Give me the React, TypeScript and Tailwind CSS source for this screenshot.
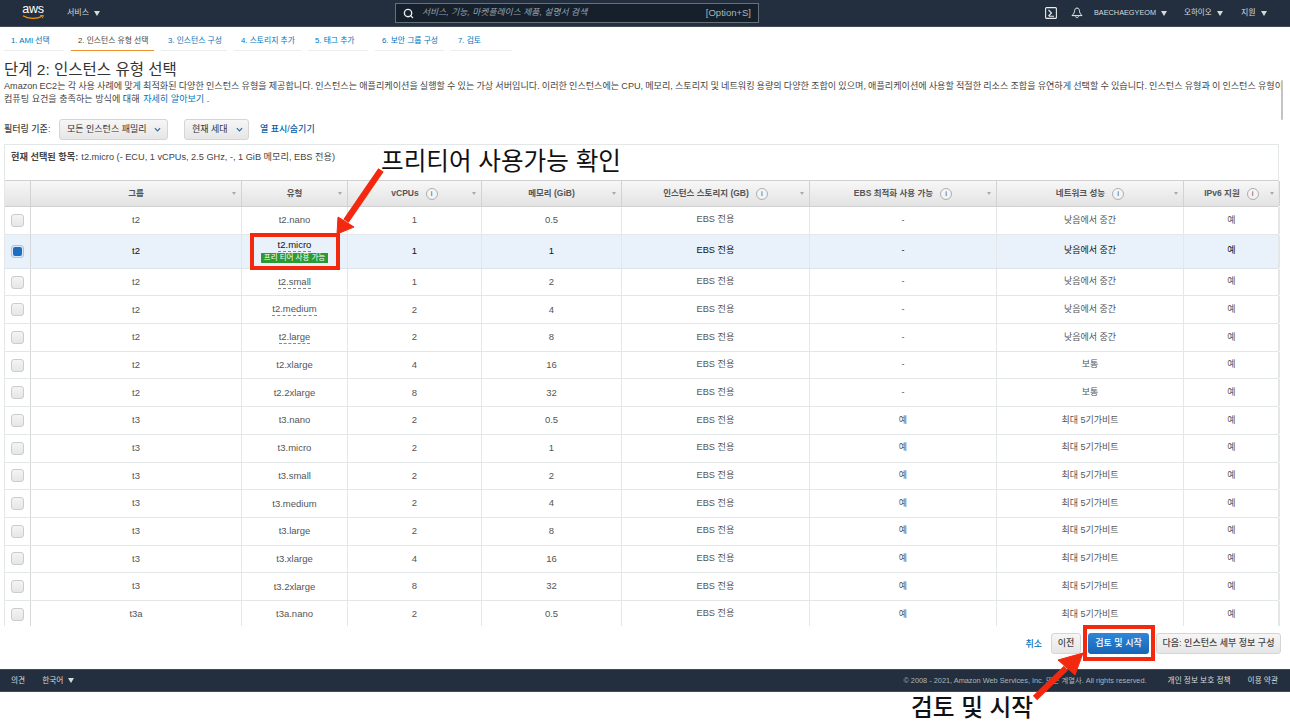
import React from "react";
import { Search } from "lucide-react";

const FONT = "font-['Liberation_Sans','Noto_Sans_CJK_KR',sans-serif]";
const GRID =
  "grid grid-cols-[26px_211px_106px_134px_140px_188px_187px_187px_96px]";

const TABS = [
  { label: "1. AMI 선택", w: "w-[60px]" },
  { label: "2. 인스턴스 유형 선택", w: "w-[83px]", active: true },
  { label: "3. 인스턴스 구성", w: "w-[66px]" },
  { label: "4. 스토리지 추가", w: "w-[67px]" },
  { label: "5. 태그 추가", w: "w-[60px]" },
  { label: "6. 보안 그룹 구성", w: "w-[69px]" },
  { label: "7. 검토", w: "w-[61px]" },
];

const COLUMNS = [
  { label: "그룹" },
  { label: "유형" },
  { label: "vCPUs", info: true },
  { label: "메모리 (GiB)" },
  { label: "인스턴스 스토리지 (GB)", info: true },
  { label: "EBS 최적화 사용 가능", info: true },
  { label: "네트워크 성능", info: true },
  { label: "IPv6 지원", info: true },
];

const LOW = "낮음에서 중간";
const MAX = "최대 5기가비트";

const ROWS: [string, string, string, string, string, string, string?][] = [
  ["t2", "t2.nano", "1", "0.5", "-", LOW],
  ["t2", "t2.micro", "1", "1", "-", LOW, "dash"],
  ["t2", "t2.small", "1", "2", "-", LOW, "dash"],
  ["t2", "t2.medium", "2", "4", "-", LOW, "dash"],
  ["t2", "t2.large", "2", "8", "-", LOW, "dash"],
  ["t2", "t2.xlarge", "4", "16", "-", "보통"],
  ["t2", "t2.2xlarge", "8", "32", "-", "보통"],
  ["t3", "t3.nano", "2", "0.5", "예", MAX],
  ["t3", "t3.micro", "2", "1", "예", MAX],
  ["t3", "t3.small", "2", "2", "예", MAX],
  ["t3", "t3.medium", "2", "4", "예", MAX],
  ["t3", "t3.large", "2", "8", "예", MAX],
  ["t3", "t3.xlarge", "4", "16", "예", MAX],
  ["t3", "t3.2xlarge", "8", "32", "예", MAX],
  ["t3a", "t3a.nano", "2", "0.5", "예", MAX],
];

const Tri = () => (
  <span className="ml-[5px] inline-block h-0 w-0 border-x-[3.5px] border-t-[5px] border-x-transparent border-t-[#d5dbdb]" />
);

const Info = () => (
  <span className="ml-[7px] flex h-[12px] w-[12px] items-center justify-center rounded-full border border-[#aab0b0] bg-white/40 text-[8px] font-normal text-[#555]">
    i
  </span>
);

const Cell = ({ children, className = "" }: { children: React.ReactNode; className?: string }) => (
  <div className={`flex flex-col items-center justify-center border-r border-[#e4e7e7] ${className}`}>
    {children}
  </div>
);

const Check = ({ on }: { on: boolean }) => (
  <div className="flex items-center justify-center border-r border-[#d5d8d8]">
    <span
      className={
        on
          ? "flex h-[13px] w-[13px] items-center justify-center rounded-[3px] border border-[#a9c6e8] bg-[#dce8f6]"
          : "h-[13px] w-[13px] rounded-[3px] border border-[#cccccc] bg-gradient-to-b from-[#f4f4f4] to-[#e6e6e6]"
      }
    >
      {on && <span className="h-[9px] w-[9px] rounded-[2px] bg-[#1b6ec2]" />}
    </span>
  </div>
);

export default function App() {
  return (
    <div className={`relative h-[723px] w-[1290px] overflow-hidden bg-white ${FONT}`}>
      {/* Top nav */}
      <header className="flex h-[27px] items-center border-b border-[#414b58] bg-[#232f3e] text-[8px] text-[#d5dbdb]">
        <div className="ml-[22px] flex h-[20px] w-[22px] flex-col items-center">
          <span className="text-[12.5px] font-normal leading-[13px] tracking-[-0.3px] text-white">aws</span>
          <svg viewBox="0 0 22 5" className="-mt-[1px] h-[5px] w-[22px]">
            <path d="M1 .8C6 4 15 4.2 20 1.2" fill="none" stroke="#f79400" strokeWidth="1.3" />
            <path d="M18.2.6 21.4.5 20.4 3.2" fill="none" stroke="#f79400" strokeWidth="1" />
          </svg>
        </div>
        <span className="ml-[23px] flex w-[37px] items-center">
          서비스
          <span className="ml-[5px] h-0 w-0 border-x-[3.5px] border-t-[5px] border-x-transparent border-t-[#d5dbdb]" />
        </span>
        <div className="ml-[291px] flex h-[20px] w-[364px] items-center border border-[#687078] bg-[#16202c] pl-[7px] pr-[7px]">
          <Search size={11} strokeWidth={3} className="text-[#eaeded]" />
          <span className="ml-[8px] flex-1 text-[8.8px] italic text-[#9aa3ab]">
            서비스, 기능, 마켓플레이스 제품, 설명서 검색
          </span>
          <span className="text-[9.5px] text-[#aab7b8]">[Option+S]</span>
        </div>
        <svg viewBox="0 0 12 12" className="ml-[286px] h-[12px] w-[12px]">
          <rect x=".6" y=".6" width="10.8" height="10.8" rx="1" fill="none" stroke="#eaeded" strokeWidth="1.1" />
          <path d="M3.5 3 6.5 6 3.5 9M4 9.2H9" fill="none" stroke="#eaeded" strokeWidth="1.1" />
        </svg>
        <svg viewBox="0 0 12 12" className="ml-[14px] h-[12px] w-[12px]">
          <path d="M6 1C4 1 3.6 3 3.4 4.8 3.2 6.4 2 7.4 1 8.6H11C10 7.4 8.8 6.4 8.6 4.8 8.4 3 8 1 6 1ZM4.6 9.2C4.8 11.2 7.2 11.2 7.4 9.2" fill="none" stroke="#eaeded" strokeWidth="1" />
        </svg>
        <span className="ml-[11px] flex w-[74px] items-center text-[7.3px]">
          BAECHAEGYEOM
          <Tri />
        </span>
        <span className="ml-[16px] flex w-[40px] items-center text-[7.5px]">
          오하이오
          <Tri />
        </span>
        <span className="ml-[17px] flex items-center">
          지원
          <Tri />
        </span>
      </header>

      {/* Wizard steps */}
      <nav className="ml-[4px] mt-[5px] flex h-[19px] gap-[7px]">
        {TABS.map((t) => (
          <div
            key={t.label}
            className={`${t.w} whitespace-nowrap pl-[7px] pt-[3px] text-[7.8px] leading-[11px] ${
              t.active
                ? "border-b-[1.5px] border-[#ec912d] text-[#444444]"
                : "border-b border-[#eaeded] text-[#0073bb]"
            }`}
          >
            {t.label}
          </div>
        ))}
      </nav>

      {/* Scrolling content */}
      <main className="relative h-[575px] overflow-hidden">
        <div className="w-[1279px] pl-[4px]">
          <h1 className="mt-[9px] text-[15.5px] font-normal leading-[20px] text-[#333333]">
            단계 2: 인스턴스 유형 선택
          </h1>
          <p className="whitespace-nowrap text-[9.1px] leading-[13px] text-[#444444] [word-spacing:-0.4px]">
            Amazon EC2는 각 사용 사례에 맞게 최적화된 다양한 인스턴스 유형을 제공합니다. 인스턴스는 애플리케이션을 실행할 수 있는 가상 서버입니다. 이러한 인스턴스에는 CPU, 메모리, 스토리지 및 네트워킹 용량의 다양한 조합이 있으며, 애플리케이션에 사용할 적절한 리소스 조합을 유연하게 선택할 수 있습니다. 인스턴스 유형과 이 인스턴스 유형이
          </p>
          <p className="text-[9.1px] leading-[13px] text-[#444444]">
            컴퓨팅 요건을 충족하는 방식에 대해 <span className="ml-[1px] text-[#0073bb]">자세히 알아보기</span> .
          </p>

          <div className="mt-[13px] flex h-[21px] items-center text-[9px]">
            <span className="w-[55px] font-medium text-[#444444]">필터링 기준:</span>
            <div className="flex h-[21px] w-[109px] items-center justify-between rounded-[3px] border border-[#d5d5d5] bg-gradient-to-b from-[#f6f6f6] to-[#e6e6e6] pl-[7px] pr-[6px] text-[#333333]">
              모든 인스턴스 패밀리
              <Chevron />
            </div>
            <div className="ml-[16px] flex h-[21px] w-[65px] items-center justify-between rounded-[3px] border border-[#d5d5d5] bg-gradient-to-b from-[#f6f6f6] to-[#e6e6e6] pl-[7px] pr-[5px] text-[#333333]">
              현재 세대
              <Chevron />
            </div>
            <span className="ml-[11px] font-medium text-[#0a5ea8]">열 표시/숨기기</span>
          </div>

          {/* Selected summary */}
          <div className="mt-[4px] flex h-[36px] w-[1275px] items-center border-x border-t border-[#e4e7e7] pl-[6px] pb-[10px] text-[9.2px] text-[#444444]">
            <span className="mr-[3px] font-bold">현재 선택된 항목:</span>
            t2.micro (- ECU, 1 vCPUs, 2.5 GHz, -, 1 GiB 메모리, EBS 전용)
          </div>

          {/* Table */}
          <div className="w-[1275px] border-x border-[#e4e7e7]">
            <div className={`${GRID} h-[27px] border-y border-[#d0d0d0] bg-gradient-to-b from-[#f7f7f7] to-[#e3e3e3] text-[8.5px] font-bold text-[#555555]`}>
              <div className="border-r border-[#d0d3d3]" />
              {COLUMNS.map((c) => (
                <div key={c.label} className="relative flex items-center justify-center border-r border-[#d0d3d3]">
                  {c.label}
                  {c.info && <Info />}
                  <span className="absolute right-[5px] top-[11px] h-0 w-0 border-x-[2.5px] border-t-[3px] border-x-transparent border-t-[#aaaaaa]" />
                </div>
              ))}
            </div>
            {ROWS.map((r) => {
              const on = r[1] === "t2.micro";
              return (
                <div
                  key={r[1]}
                  className={`${GRID} border-b text-[9.5px] ${
                    on
                      ? "h-[34px] border-[#dde3ea] bg-[#e9f1fb] text-[#111111]"
                      : "h-[27.7px] border-[#e4e7e7] text-[#555555]"
                  }`}
                >
                  <Check on={on} />
                  <Cell>{r[0]}</Cell>
                  <Cell>
                    <span className={r[6] ? "border-b border-dashed border-[#888888] leading-[12px]" : "leading-[12px]"}>
                      {r[1]}
                    </span>
                    {on && (
                      <span className="mt-[1px] bg-[#2a9a33] px-[3px] text-[7.5px] leading-[10px] text-white">
                        프리 티어 사용 가능
                      </span>
                    )}
                  </Cell>
                  <Cell>{r[2]}</Cell>
                  <Cell>{r[3]}</Cell>
                  <Cell className="text-[9.2px]">EBS 전용</Cell>
                  <Cell className="text-[9px]">{r[4]}</Cell>
                  <Cell className="text-[9px]">{r[5]}</Cell>
                  <Cell className="text-[9px]">예</Cell>
                </div>
              );
            })}
          </div>
        </div>
        {/* Scroll thumb */}
        <div className="absolute right-[7px] top-[29px] h-[40px] w-[2px] rounded-full bg-[#c4c4c4]" />
      </main>

      {/* Wizard actions */}
      <div className="flex h-[43px] items-start justify-end pr-[9px] pt-[7px] text-[9px]">
        <span className="mr-[9px] mt-[5px] font-medium text-[#0073bb]">취소</span>
        <button className="h-[21px] w-[30px] rounded-[3px] border border-[#d5d5d5] bg-gradient-to-b from-[#f6f6f6] to-[#e6e6e6] font-medium text-[#444444]">
          이전
        </button>
        <button className="ml-[7px] h-[21px] w-[61px] rounded-[3px] bg-gradient-to-b from-[#2f86da] to-[#1565b5] font-medium text-white">
          검토 및 시작
        </button>
        <button className="ml-[7px] h-[21px] w-[125px] rounded-[3px] border border-[#d5d5d5] bg-gradient-to-b from-[#f6f6f6] to-[#e6e6e6] font-medium text-[#444444]">
          다음: 인스턴스 세부 정보 구성
        </button>
      </div>

      {/* Footer */}
      <footer className="flex h-[23px] items-center border-y border-[#414b58] bg-[#232f3e] pl-[11px] pr-[12px] text-[7.7px] text-[#d5dbdb]">
        <span>의견</span>
        <span className="ml-[17px] flex items-center">
          한국어
          <Tri />
        </span>
        <span className="ml-auto text-[7.35px] text-[#aab7b8]">
          © 2008 - 2021, Amazon Web Services, Inc. 또는 계열사. All rights reserved.
        </span>
        <span className="ml-[21px]">개인 정보 보호 정책</span>
        <span className="ml-[17px]">이용 약관</span>
      </footer>

      {/* Red annotations drawn over the screenshot */}
      <div className="absolute left-[250px] top-[233px] h-[37px] w-[90px] border-[4px] border-[#f3290f]" />
      <div className="absolute left-[1083px] top-[625px] h-[36px] w-[72px] border-[4px] border-[#f3290f]" />
      <span className="absolute left-[381px] top-[147px] whitespace-nowrap text-[24.6px] leading-[30px] text-[#111111]">
        프리티어 사용가능 확인
      </span>
      <span className="absolute left-[911px] top-[693px] whitespace-nowrap text-[23.7px] font-medium leading-[30px] text-[#111111]">
        검토 및 시작
      </span>
      <svg className="pointer-events-none absolute left-0 top-0" width="1290" height="723" viewBox="0 0 1290 723">
        <path d="M381 170 346 221" stroke="#f3290f" strokeWidth="6.5" fill="none" />
        <path d="M337 234 338 217 354 227Z" fill="#f3290f" stroke="#f3290f" />
        <path d="M1035 698 1066 668" stroke="#f3290f" strokeWidth="6" fill="none" />
        <path d="M1083 653 1058 660 1075 675Z" fill="#f3290f" stroke="#f3290f" />
      </svg>
    </div>
  );
}

function Chevron() {
  return (
    <svg viewBox="0 0 8 5" className="h-[5px] w-[7px]">
      <path d="M1 1 4 4 7 1" fill="none" stroke="#2b6cb0" strokeWidth="1.4" />
    </svg>
  );
}
